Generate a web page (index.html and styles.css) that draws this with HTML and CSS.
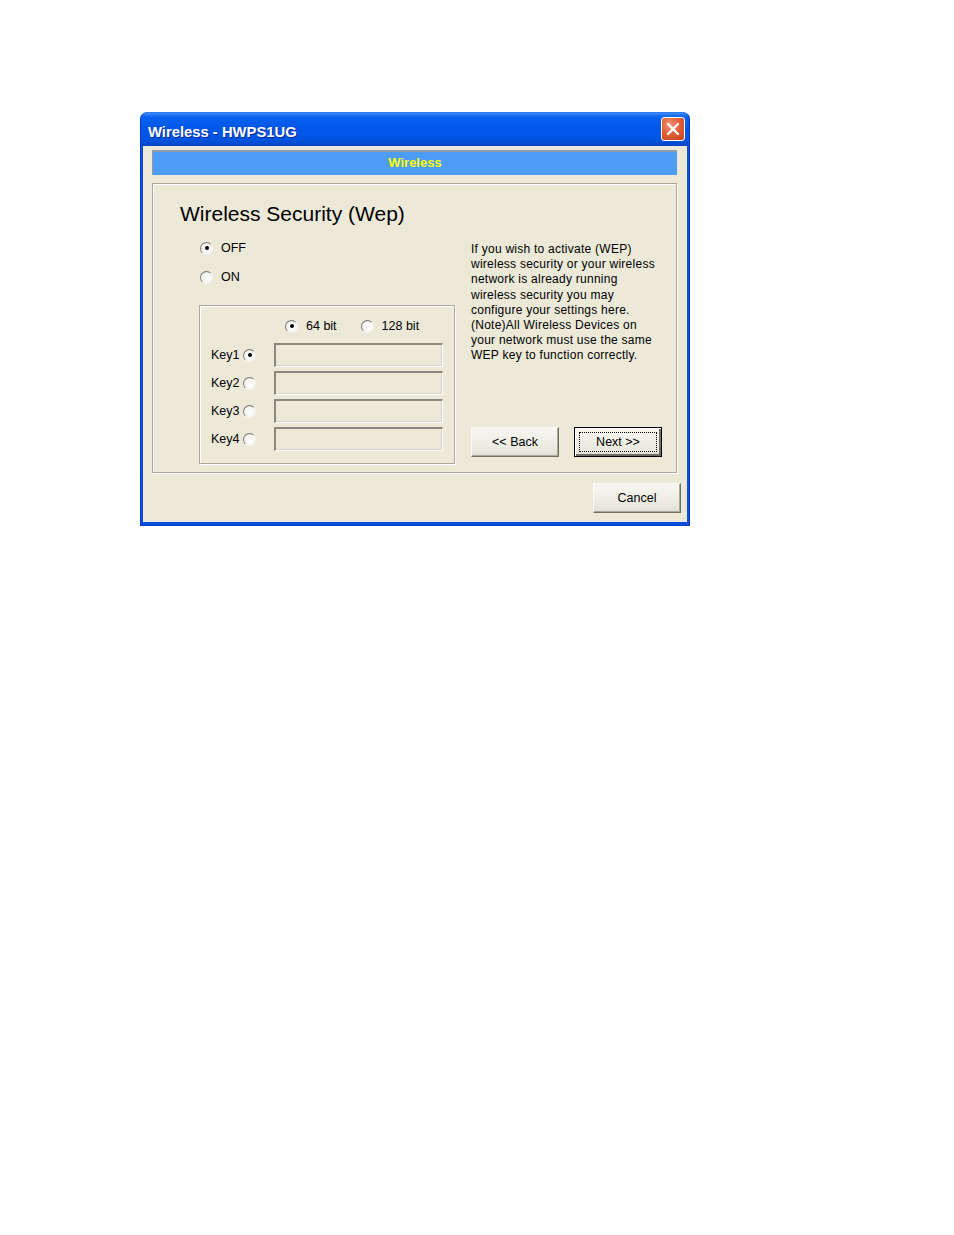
FILE: index.html
```html
<!DOCTYPE html>
<html>
<head>
<meta charset="utf-8">
<title>Wireless - HWPS1UG</title>
<link rel="stylesheet" href="styles.css">
</head>
<body>
<div class="window">
  <div class="titlebar">
    <span class="title">Wireless - HWPS1UG</span>
    <span class="close">
      <svg width="14" height="14" viewBox="0 0 14 14"><path d="M2 2 L12 12 M12 2 L2 12" stroke="#fff" stroke-width="2.4" stroke-linecap="round"/></svg>
    </span>
  </div>
  <div class="client">
    <div class="banner">Wireless</div>
    <div class="panel">
      <div class="heading">Wireless Security (Wep)</div>
      <div class="panel-body">
        <div class="left">
          <label class="opt opt-top"><span class="radio checked"></span><span>OFF</span></label>
          <label class="opt opt-top opt-on"><span class="radio"></span><span>ON</span></label>
          <div class="group">
            <div class="bits">
              <label class="opt"><span class="radio checked"></span><span>64 bit</span></label>
              <label class="opt"><span class="radio"></span><span>128 bit</span></label>
            </div>
            <div class="keys">
              <div class="key"><span class="key-label">Key1</span><span class="radio checked"></span><span class="field"></span></div>
              <div class="key"><span class="key-label">Key2</span><span class="radio"></span><span class="field"></span></div>
              <div class="key"><span class="key-label">Key3</span><span class="radio"></span><span class="field"></span></div>
              <div class="key"><span class="key-label">Key4</span><span class="radio"></span><span class="field"></span></div>
            </div>
          </div>
        </div>
        <div class="right">
          <p class="help">If you wish to activate (WEP)<br>wireless security or your wireless<br>network is already running<br>wireless security you may<br>configure your settings here.<br>(Note)All Wireless Devices on<br>your network must use the same<br>WEP key to function correctly.</p>
          <div class="nav">
            <button class="btn">&lt;&lt; Back</button>
            <button class="btn btn-default"><span class="focus">Next &gt;&gt;</span></button>
          </div>
        </div>
      </div>
    </div>
    <div class="footer">
      <button class="btn">Cancel</button>
    </div>
  </div>
</div>
</body>
</html>
```
FILE: styles.css
```css
* { box-sizing: border-box; }
html, body { margin: 0; padding: 0; background: #fff; }
body { font-family: "Liberation Sans", Arial, sans-serif; font-size: 12px; color: #000; }

.window {
  margin: 112px 0 0 140px;
  width: 550px;
  height: 414px;
  background: #0a4fdc;
  border-radius: 7px 7px 0 0;
  display: flex;
  flex-direction: column;
  border: 1px solid #0a3cc8;
  border-top-color: #2e7af0;
}

.titlebar {
  height: 33px;
  flex: none;
  display: flex;
  align-items: center;
  padding: 0 4px 0 7px;
  border-radius: 6px 6px 0 0;
  background: linear-gradient(#3c8ef6 0%, #0a62ee 12%, #0058ea 40%, #0055e4 70%, #0350d8 88%, #0a44c4 100%);
}
.title {
  flex: 1;
  color: #fff;
  font-weight: bold;
  font-size: 14.8px;
  text-shadow: 1px 1px 0 #0a2a9a;
  padding-top: 4px;
}
.close {
  width: 24px;
  height: 24px;
  border: 1px solid #fff;
  border-radius: 3px;
  background: radial-gradient(circle at 35% 30%, #f09676 0%, #e0603a 45%, #c84218 100%);
  display: flex;
  align-items: center;
  justify-content: center;
  margin-bottom: 2px;
}

.client {
  flex: 1;
  margin: 0 2px 3px 2px;
  background: #ece9d8;
  padding: 4px 10px 0 9px;
  display: flex;
  flex-direction: column;
}

.banner {
  height: 25px;
  background: #4d9cf6;
  border-top: 2px solid #8d9aa8;
  border-left: 1px solid #8d9aa8;
  color: #ffff00;
  font-weight: bold;
  font-size: 13px;
  display: flex;
  align-items: center;
  justify-content: center;
  padding-bottom: 3px;
}

.panel {
  margin-top: 8px;
  height: 290px;
  border: 1px solid #aca899;
  box-shadow: inset 1px 1px 0 #fff, 1px 1px 0 #fff;
  padding: 18px 0 8px 27px;
  display: flex;
  flex-direction: column;
}
.heading {
  font-size: 21px;
  line-height: 24px;
  height: 24px;
}
.panel-body {
  margin-top: 14px;
  display: flex;
  flex: 1;
}

.left {
  margin-left: 19px;
  width: 256px;
  display: flex;
  flex-direction: column;
}
.opt {
  display: flex;
  align-items: center;
  height: 16px;
  gap: 8px;
  font-size: 12.5px;
}
.opt-top { margin-left: 1px; }
.opt-on { margin-top: 13px; }

.radio {
  width: 13px;
  height: 13px;
  flex: none;
  border-radius: 50%;
  border: 1px solid;
  border-color: #7a7a7a #f4f4f4 #f4f4f4 #7a7a7a;
  background: radial-gradient(circle at 60% 60%, #ffffff 0%, #f4f3ee 60%, #dcdad0 100%);
  position: relative;
}
.radio.checked::after {
  content: "";
  position: absolute;
  left: 3.5px;
  top: 3.5px;
  width: 4px;
  height: 4px;
  border-radius: 50%;
  background: #000;
}

.group {
  margin-top: 20px;
  height: 159px;
  border: 1px solid #aca899;
  box-shadow: inset 1px 1px 0 #fff, 1px 1px 0 #fff;
  padding: 12px 0 0 11px;
  display: flex;
  flex-direction: column;
}
.bits {
  display: flex;
  gap: 24px;
  margin-left: 74px;
}
.keys {
  margin-top: 9px;
  display: flex;
  flex-direction: column;
  gap: 4px;
}
.key {
  display: flex;
  align-items: center;
  height: 24px;
}
.key-label {
  width: 32px;
  font-size: 12.5px;
}
.field {
  margin-left: 18px;
  width: 169px;
  height: 24px;
  background: #ece9d8;
  border-top: 2px solid #8a887e;
  border-left: 2px solid #8a887e;
  border-right: 1px solid #fff;
  border-bottom: 1px solid #fff;
  box-shadow: inset -1px -1px 0 #d8d5c6;
}

.right {
  margin-left: 16px;
  width: 200px;
  display: flex;
  flex-direction: column;
}
.help {
  margin: 2px 0 0 0;
  font-size: 12px;
  line-height: 15.2px;
  letter-spacing: 0.25px;
}
.nav {
  margin-top: 63px;
  display: flex;
  gap: 15px;
}

.btn {
  width: 88px;
  height: 30px;
  font-family: "Liberation Sans", Arial, sans-serif;
  font-size: 12.5px;
  color: #000;
  background: linear-gradient(#f7f6f0, #ecebe2 70%, #e2e0d4);
  border: 1px solid;
  border-color: #fbfaf6 #716f64 #716f64 #fbfaf6;
  box-shadow: inset -1px -1px 0 #aca899;
  padding: 0;
  display: flex;
  align-items: center;
  justify-content: center;
}
.btn-default {
  border: 1px solid #000;
  box-shadow: inset 1px 1px 0 #fff, inset -2px -2px 0 #716f64;
}
.focus {
  width: 78px;
  height: 20px;
  border: 1px dotted #000;
  display: flex;
  align-items: center;
  justify-content: center;
}

.footer {
  margin-top: 10px;
  display: flex;
  justify-content: flex-end;
  margin-right: -4px;
}
```
